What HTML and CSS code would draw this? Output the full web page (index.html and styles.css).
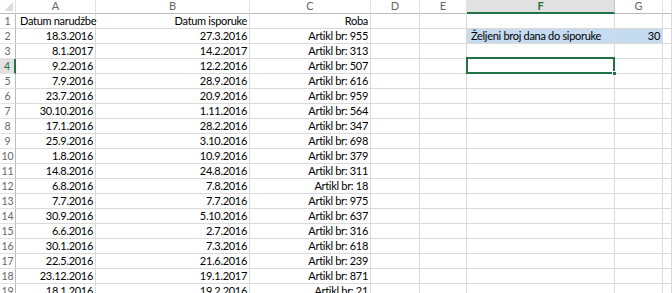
FILE: index.html
```html
<!DOCTYPE html>
<html>
<head>
<meta charset="utf-8">
<link rel="stylesheet" href="styles.css">
</head>
<body>
<div class="sheet">
  <div class="row head">
    <div class="c corner"><span class="tri"></span></div>
    <div class="c">A</div><div class="c">B</div><div class="c">C</div><div class="c">D</div><div class="c">E</div><div class="c sel-col">F</div><div class="c">G</div><div class="c"></div>
  </div>
  <div class="row"><div class="c rh">1</div><div class="c l">Datum narudžbe</div><div class="c r">Datum isporuke</div><div class="c r">Roba</div><div class="c"></div><div class="c"></div><div class="c"></div><div class="c"></div><div class="c"></div></div>
  <div class="row"><div class="c rh">2</div><div class="c r">18.3.2016</div><div class="c r">27.3.2016</div><div class="c r">Artikl br: 955</div><div class="c"></div><div class="c"></div><div class="c l hl">Željeni broj dana do siporuke</div><div class="c r hl">30</div><div class="c"></div></div>
  <div class="row"><div class="c rh">3</div><div class="c r">8.1.2017</div><div class="c r">14.2.2017</div><div class="c r">Artikl br: 313</div><div class="c"></div><div class="c"></div><div class="c"></div><div class="c"></div><div class="c"></div></div>
  <div class="row"><div class="c rh sel-row">4</div><div class="c r">9.2.2016</div><div class="c r">12.2.2016</div><div class="c r">Artikl br: 507</div><div class="c"></div><div class="c"></div><div class="c active"></div><div class="c"></div><div class="c"></div></div>
  <div class="row"><div class="c rh">5</div><div class="c r">7.9.2016</div><div class="c r">28.9.2016</div><div class="c r">Artikl br: 616</div><div class="c"></div><div class="c"></div><div class="c"></div><div class="c"></div><div class="c"></div></div>
  <div class="row"><div class="c rh">6</div><div class="c r">23.7.2016</div><div class="c r">20.9.2016</div><div class="c r">Artikl br: 959</div><div class="c"></div><div class="c"></div><div class="c"></div><div class="c"></div><div class="c"></div></div>
  <div class="row"><div class="c rh">7</div><div class="c r">30.10.2016</div><div class="c r">1.11.2016</div><div class="c r">Artikl br: 564</div><div class="c"></div><div class="c"></div><div class="c"></div><div class="c"></div><div class="c"></div></div>
  <div class="row"><div class="c rh">8</div><div class="c r">17.1.2016</div><div class="c r">28.2.2016</div><div class="c r">Artikl br: 347</div><div class="c"></div><div class="c"></div><div class="c"></div><div class="c"></div><div class="c"></div></div>
  <div class="row"><div class="c rh">9</div><div class="c r">25.9.2016</div><div class="c r">3.10.2016</div><div class="c r">Artikl br: 698</div><div class="c"></div><div class="c"></div><div class="c"></div><div class="c"></div><div class="c"></div></div>
  <div class="row"><div class="c rh">10</div><div class="c r">1.8.2016</div><div class="c r">10.9.2016</div><div class="c r">Artikl br: 379</div><div class="c"></div><div class="c"></div><div class="c"></div><div class="c"></div><div class="c"></div></div>
  <div class="row"><div class="c rh">11</div><div class="c r">14.8.2016</div><div class="c r">24.8.2016</div><div class="c r">Artikl br: 311</div><div class="c"></div><div class="c"></div><div class="c"></div><div class="c"></div><div class="c"></div></div>
  <div class="row"><div class="c rh">12</div><div class="c r">6.8.2016</div><div class="c r">7.8.2016</div><div class="c r">Artikl br: 18</div><div class="c"></div><div class="c"></div><div class="c"></div><div class="c"></div><div class="c"></div></div>
  <div class="row"><div class="c rh">13</div><div class="c r">7.7.2016</div><div class="c r">7.7.2016</div><div class="c r">Artikl br: 975</div><div class="c"></div><div class="c"></div><div class="c"></div><div class="c"></div><div class="c"></div></div>
  <div class="row"><div class="c rh">14</div><div class="c r">30.9.2016</div><div class="c r">5.10.2016</div><div class="c r">Artikl br: 637</div><div class="c"></div><div class="c"></div><div class="c"></div><div class="c"></div><div class="c"></div></div>
  <div class="row"><div class="c rh">15</div><div class="c r">6.6.2016</div><div class="c r">2.7.2016</div><div class="c r">Artikl br: 316</div><div class="c"></div><div class="c"></div><div class="c"></div><div class="c"></div><div class="c"></div></div>
  <div class="row"><div class="c rh">16</div><div class="c r">30.1.2016</div><div class="c r">7.3.2016</div><div class="c r">Artikl br: 618</div><div class="c"></div><div class="c"></div><div class="c"></div><div class="c"></div><div class="c"></div></div>
  <div class="row"><div class="c rh">17</div><div class="c r">22.5.2016</div><div class="c r">21.6.2016</div><div class="c r">Artikl br: 239</div><div class="c"></div><div class="c"></div><div class="c"></div><div class="c"></div><div class="c"></div></div>
  <div class="row"><div class="c rh">18</div><div class="c r">23.12.2016</div><div class="c r">19.1.2017</div><div class="c r">Artikl br: 871</div><div class="c"></div><div class="c"></div><div class="c"></div><div class="c"></div><div class="c"></div></div>
  <div class="row"><div class="c rh">19</div><div class="c r">18.1.2016</div><div class="c r">19.2.2016</div><div class="c r">Artikl br: 21</div><div class="c"></div><div class="c"></div><div class="c"></div><div class="c"></div><div class="c"></div></div>
</div>
</body>
</html>
```
FILE: styles.css
```css
html, body {
  margin: 0;
  padding: 0;
  background: #fff;
  overflow: hidden;
}
.sheet {
  width: 672px;
  height: 293px;
  overflow: hidden;
  font-family: Lato, "Liberation Sans", sans-serif;
  font-size: 11px;
  color: #000;
}
.row {
  display: grid;
  grid-template-columns: 16px 80px 154px 121px 49px 47px 148px 48px 1fr;
  height: 15px;
}
.c {
  box-sizing: border-box;
  border-right: 1px solid #dadada;
  border-bottom: 1px solid #dadada;
  line-height: 14px;
  white-space: nowrap;
  overflow: visible;
  padding: 0 2px;
  min-width: 0;
  letter-spacing: -0.3px;
}
.r { text-align: right; }
.l { text-align: left; padding-left: 4px; }
.head {
  height: 14px;
}
.head .c {
  background: #fff;
  color: #666;
  text-align: center;
  line-height: 11px;
  letter-spacing: 0;
  border-bottom: 1px solid #bcbcbc;
  border-right: 1px solid #e2e2e2;
}
.head .corner {
  position: relative;
  padding: 0;
}
.tri {
  position: absolute;
  right: 2px;
  bottom: 2px;
  width: 0;
  height: 0;
  border-left: 9px solid transparent;
  border-bottom: 9px solid #dcdcdc;
}
.head .sel-col {
  background: #e1e1e1;
  color: #217346;
  font-weight: bold;
  border-bottom: 2px solid #217346;
  border-right: 1px solid #c6c6c6;
}
.rh {
  color: #666;
  text-align: center;
  padding: 0;
  letter-spacing: 0;
  border-right: 1px solid #bcbcbc;
  border-bottom: 1px solid #e2e2e2;
  font-size: 10.5px;
}
.rh.sel-row {
  background: #e1e1e1;
  color: #217346;
  border-right: 2px solid #217346;
}
.hl {
  background: #c5dbf0;
}
.active {
  position: relative;
}
.active::after {
  content: "";
  position: absolute;
  left: -1px;
  top: -2px;
  right: -1px;
  bottom: -1px;
  border: 2px solid #217346;
}
.active::before {
  content: "";
  position: absolute;
  right: -3px;
  bottom: -3px;
  width: 5px;
  height: 5px;
  background: #217346;
  border: 1px solid #fff;
  box-sizing: border-box;
  z-index: 2;
}
```
